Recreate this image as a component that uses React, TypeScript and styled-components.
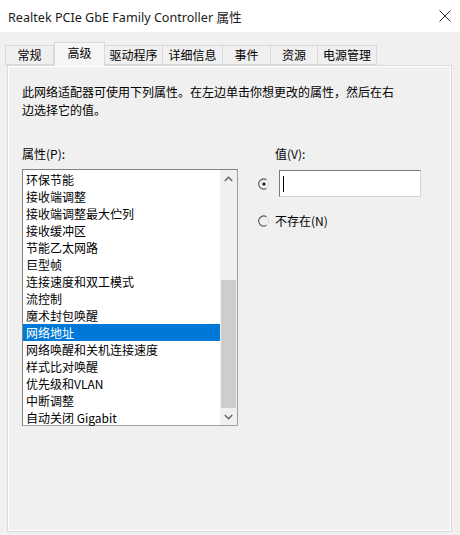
import React from "react";
import styled, { createGlobalStyle } from "styled-components";

const Global = createGlobalStyle`
  html, body { margin: 0; padding: 0; background: #f0f0f0; }
  * { box-sizing: border-box; }
`;

const FONT = `"Noto Sans", "Noto Sans CJK SC", sans-serif`;
const CJK = `"Noto Sans CJK SC", "Noto Sans", sans-serif`;

const Window = styled.div`
  width: 460px;
  height: 535px;
  background: #f0f0f0;
  display: flex;
  flex-direction: column;
  font-family: ${CJK};
  color: #000;
  overflow: hidden;
`;

const TitleBar = styled.div`
  height: 32px;
  flex: none;
  background: #fff;
  display: flex;
  align-items: center;
  justify-content: space-between;
  padding: 0 8px 0 8px;
  font-family: ${FONT};
  font-size: 12.6px;
  color: #1a1a1a;
`;

const CloseBtn = styled.div`
  width: 14px;
  height: 14px;
  display: flex;
  align-items: center;
  justify-content: center;
`;

const TabStrip = styled.div`
  display: flex;
  align-items: flex-end;
  padding: 9px 0 0 5px;
  height: 33px;
  flex: none;
  position: relative;
  z-index: 1;
`;

const Tab = styled.div<{ $active?: boolean; $first?: boolean; $w: number }>`
  width: ${(p) => p.$w}px;
  height: ${(p) => (p.$active ? 24 : 20)}px;
  margin-bottom: ${(p) => (p.$active ? -1 : 0)}px;
  background: ${(p) => (p.$active ? "#f5f5f5" : "#f0f0f0")};
  border: 1px solid #d9d9d9;
  border-bottom: ${(p) => (p.$active ? "none" : "1px solid #d9d9d9")};
  border-left: ${(p) => (p.$first || p.$active ? "1px solid #d9d9d9" : "none")};
  display: flex;
  align-items: ${(p) => (p.$active ? "flex-start" : "center")};
  padding: ${(p) => (p.$active ? "2px 0 0 0" : "0")};
  justify-content: center;
  font-size: 12px;
  line-height: 16px;
`;

const Panel = styled.div`
  flex: 1;
  margin: 0 8px 3px 7px;
  border: 1px solid #d9d9d9;
  box-shadow: inset 0 0 0 1px #ffffff;
  background: #f0f0f0;
  padding: 17px 14px 0 14px;
  display: flex;
  flex-direction: column;
`;

const Description = styled.div`
  font-size: 12px;
  line-height: 18px;
  width: 380px;
`;

const Columns = styled.div`
  display: grid;
  grid-template-columns: 216px 1fr;
  column-gap: 20px;
  margin-top: 26px;
`;

const Column = styled.div`
  display: flex;
  flex-direction: column;
`;

const Label = styled.div<{ $indent?: number }>`
  font-size: 12px;
  line-height: 18px;
  padding-left: ${(p) => p.$indent ?? 0}px;
`;

const ListBox = styled.div`
  margin-top: 6px;
  width: 216px;
  height: 257px;
  border: 1px solid #a0a0a0;
  border-top-color: #828282;
  border-left-color: #828282;
  background: #fff;
  display: flex;
`;

const Items = styled.div`
  flex: 1;
  padding-top: 1px;
  display: flex;
  flex-direction: column;
`;

const Item = styled.div<{ $selected?: boolean }>`
  height: 17px;
  line-height: 17px;
  font-size: 12px;
  padding-left: 3px;
  white-space: nowrap;
  background: ${(p) => (p.$selected ? "#0078d7" : "transparent")};
  color: ${(p) => (p.$selected ? "#fff" : "#000")};
`;

const ScrollBar = styled.div`
  width: 17px;
  background: #f0f0f0;
  display: flex;
  flex-direction: column;
`;

const Arrow = styled.div`
  height: 17px;
  flex: none;
  display: flex;
  align-items: center;
  justify-content: center;
`;

const Track = styled.div`
  flex: 1;
  display: flex;
  flex-direction: column;
  justify-content: flex-end;
  padding: 0 1px;
`;

const Thumb = styled.div`
  height: 128px;
  background: #cdcdcd;
`;

const OptionRow = styled.div<{ $mt: number }>`
  display: flex;
  align-items: center;
  margin-top: ${(p) => p.$mt}px;
`;

const Radio = styled.div`
  width: 12px;
  height: 12px;
  flex: none;
  display: flex;
`;

const ValueInput = styled.div`
  margin-left: 9px;
  width: 142px;
  height: 27px;
  background: #fff;
  border: 1px solid #d4d4d4;
  border-top-color: #7a7a7a;
  border-left-color: #7a7a7a;
  display: flex;
  align-items: center;
  padding-left: 3px;
`;

const Caret = styled.div`
  width: 1px;
  height: 16px;
  background: #000;
`;

const OptionText = styled.div`
  margin-left: 5px;
  font-size: 12px;
  line-height: 18px;
`;

const RadioIcon = ({ checked }: { checked?: boolean }) => (
  <svg width="12" height="12" viewBox="0 0 12 12">
    <path d="M8.5 1.8 A5 5 0 1 0 8.5 10.2" fill="none" stroke="#5a5a5a" strokeWidth="1.1" />
    <path d="M8.5 1.8 A5 5 0 0 1 8.5 10.2" fill="none" stroke="#dcdcdc" strokeWidth="1" />
    {checked && <circle cx="6" cy="6" r="1.6" fill="#111" />}
  </svg>
);

const tabs: { label: string; w: number }[] = [
  { label: "常规", w: 49 },
  { label: "高级", w: 51 },
  { label: "驱动程序", w: 58 },
  { label: "详细信息", w: 60 },
  { label: "事件", w: 48 },
  { label: "资源", w: 47 },
  { label: "电源管理", w: 59 },
];

const items = [
  "环保节能",
  "接收端调整",
  "接收端调整最大伫列",
  "接收缓冲区",
  "节能乙太网路",
  "巨型帧",
  "连接速度和双工模式",
  "流控制",
  "魔术封包唤醒",
  "网络地址",
  "网络唤醒和关机连接速度",
  "样式比对唤醒",
  "优先级和VLAN",
  "中断调整",
  "自动关闭 Gigabit",
];

export default function App() {
  return (
    <>
      <Global />
      <Window>
        <TitleBar>
          <span>Realtek PCIe GbE Family Controller 属性</span>
          <CloseBtn>
            <svg width="12" height="12" viewBox="0 0 12 12">
              <path d="M0.5 0.5 L11.5 11.5 M11.5 0.5 L0.5 11.5" stroke="#333" strokeWidth="1" />
            </svg>
          </CloseBtn>
        </TitleBar>
        <TabStrip>
          {tabs.map((t, i) => (
            <Tab key={t.label} $w={t.w} $active={i === 1} $first={i === 0}>
              {t.label}
            </Tab>
          ))}
        </TabStrip>
        <Panel>
          <Description>
            此网络适配器可使用下列属性。在左边单击你想更改的属性，然后在右边选择它的值。
          </Description>
          <Columns>
            <Column>
              <Label>属性(P):</Label>
              <ListBox>
                <Items>
                  {items.map((it) => (
                    <Item key={it} $selected={it === "网络地址"}>
                      {it}
                    </Item>
                  ))}
                </Items>
                <ScrollBar>
                  <Arrow>
                    <svg width="9" height="6" viewBox="0 0 9 6">
                      <path d="M0.8 5 L4.5 1.3 L8.2 5" fill="none" stroke="#606060" strokeWidth="1.4" />
                    </svg>
                  </Arrow>
                  <Track>
                    <Thumb />
                  </Track>
                  <Arrow>
                    <svg width="9" height="6" viewBox="0 0 9 6">
                      <path d="M0.8 1 L4.5 4.7 L8.2 1" fill="none" stroke="#606060" strokeWidth="1.4" />
                    </svg>
                  </Arrow>
                </ScrollBar>
              </ListBox>
            </Column>
            <Column>
              <Label $indent={17}>值(V):</Label>
              <OptionRow $mt={7}>
                <Radio>
                  <RadioIcon checked />
                </Radio>
                <ValueInput>
                  <Caret />
                </ValueInput>
              </OptionRow>
              <OptionRow $mt={15}>
                <Radio>
                  <RadioIcon />
                </Radio>
                <OptionText>不存在(N)</OptionText>
              </OptionRow>
            </Column>
          </Columns>
        </Panel>
      </Window>
    </>
  );
}
